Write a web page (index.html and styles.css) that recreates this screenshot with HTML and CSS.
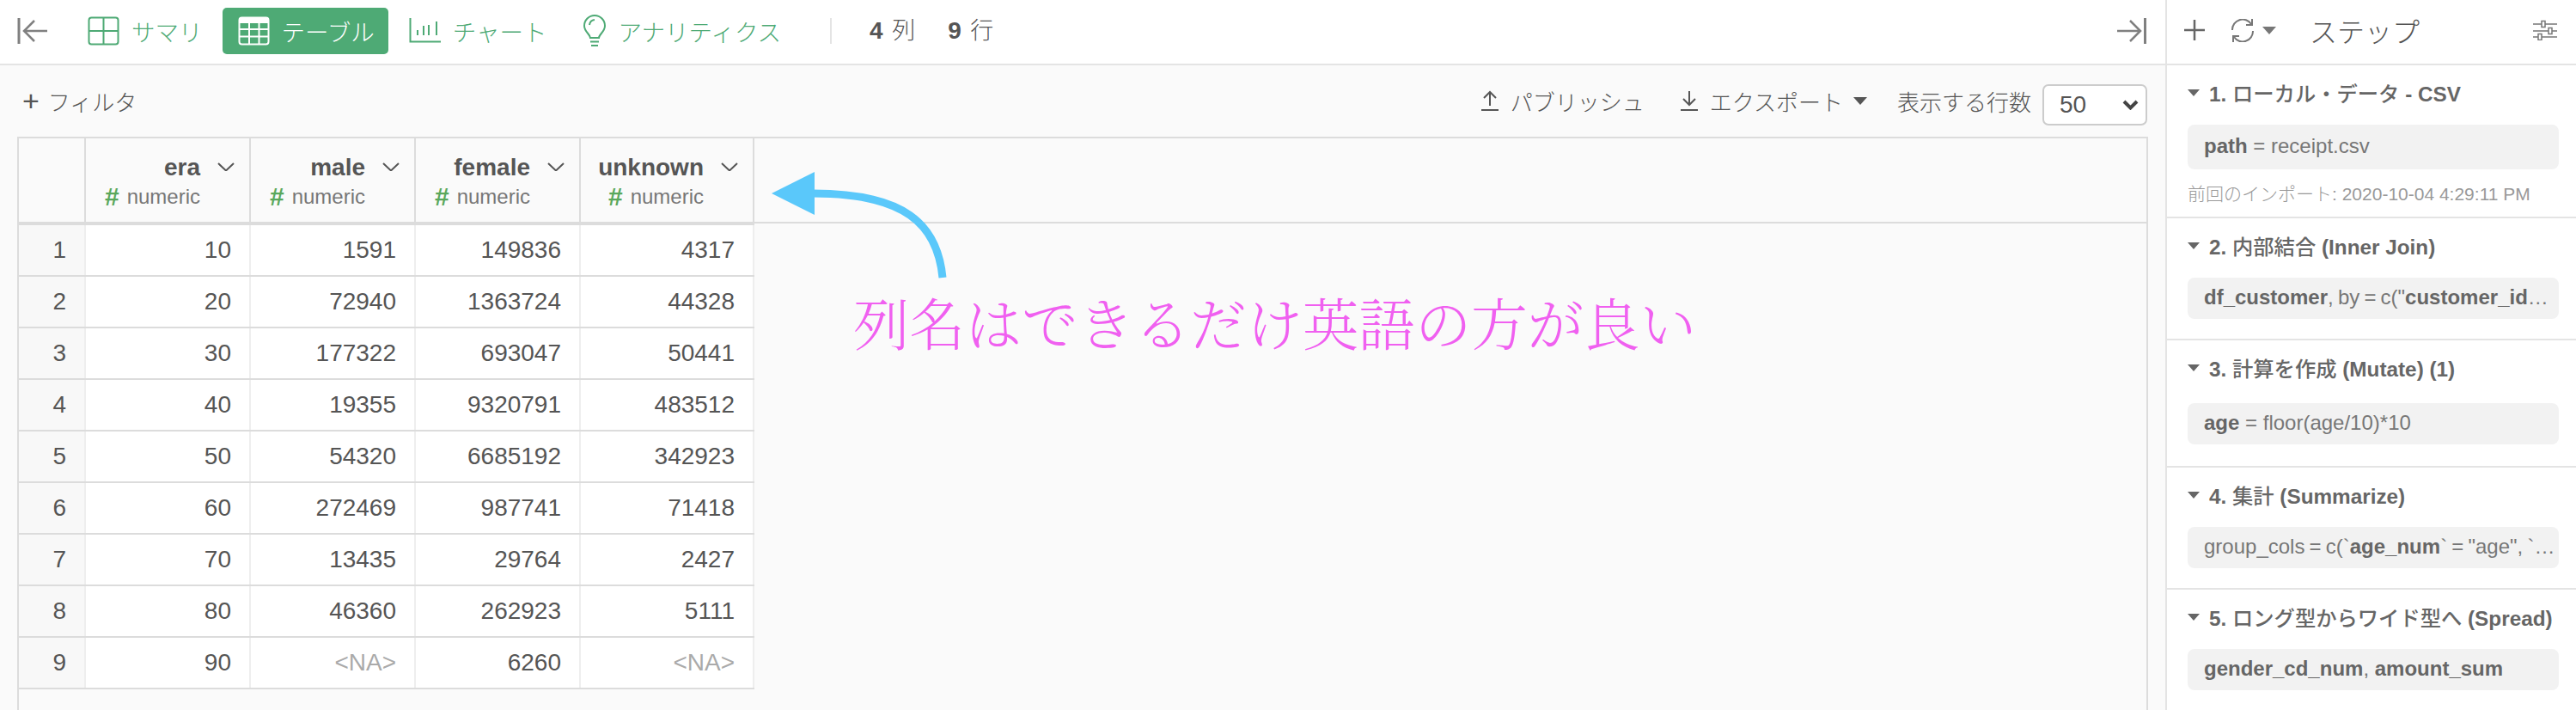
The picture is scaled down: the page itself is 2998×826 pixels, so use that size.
FILE: index.html
```html
<!DOCTYPE html>
<html lang="ja">
<head>
  <meta charset="UTF-8">
  <title>テーブル</title>
  <link rel="stylesheet" href="styles.css">
</head>
<body>
  <div class="app">
    <main class="main">
      <header class="toolbar">
        <svg class="icon-collapse" width="38" height="32" viewBox="0 0 38 32"><path d="M3 1v30" stroke-width="3"/><path d="M36 16H9M21 4L9 16l12 12" stroke-width="2.5"/></svg>
        <nav class="tabs">
          <a class="tab">
            <svg width="37" height="34" viewBox="0 0 37 34"><rect x="1.500" y="1.500" width="34" height="31" rx="3"/><path d="M18.500 2v30M2 17h33"/></svg>
            <span>サマリ</span>
          </a>
          <a class="tab tab-active">
            <svg width="37" height="34" viewBox="0 0 37 34"><rect x="1.500" y="1.500" width="34" height="31" rx="3"/><path d="M2 15h33M2 23.500h33M13 6v26M24.500 6v26"/><path d="M2 5h33" stroke-width="6"/></svg>
            <span>テーブル</span>
          </a>
          <a class="tab">
            <svg width="37" height="30" viewBox="0 0 37 30"><path d="M1.500 0v27.500H37"/><path d="M10 20v-6M17 20V9M23 20V8M32 20V4" stroke-width="2"/></svg>
            <span>チャート</span>
          </a>
          <a class="tab">
            <svg width="28" height="38" viewBox="0 0 28 38"><path d="M9 27c0-4-7-7-7-14a12 12 0 0 1 24 0c0 7-7 10-7 14zM9 31.500h10M10 36h8M14 6a7 7 0 0 0-6 6"/></svg>
            <span>アナリティクス</span>
          </a>
        </nav>
        <div class="counts">
          <span><b>4</b> 列</span>
          <span><b>9</b> 行</span>
        </div>
        <svg class="icon-collapse icon-collapse-right" width="36" height="32" viewBox="0 0 36 32"><path d="M33.500 1v30" stroke-width="3"/><path d="M1 16h27M16 4l12 12-12 12" stroke-width="2.500"/></svg>
      </header>

      <div class="filter-bar">
        <a class="action"><span class="plus">+</span>フィルタ</a>
        <div class="filter-right">
          <a class="action">
            <svg width="20" height="24" viewBox="0 0 20 24"><path d="M10 18V2M3 9l7-7 7 7M0 23h20"/></svg>
            パブリッシュ
          </a>
          <a class="action action-menu">
            <svg width="20" height="24" viewBox="0 0 20 24"><path d="M10 1v16M3 10l7 7 7-7M0 23h20"/></svg>
            エクスポート
            <i class="caret"></i>
          </a>
          <span class="action action-label">表示する行数</span>
          <div class="select">
            <span>50</span>
            <svg width="19" height="12" viewBox="0 0 19 12"><path d="M2 2l7.500 7.500L17 2"/></svg>
          </div>
        </div>
      </div>

      <section class="grid-panel">
        <div class="grid-head">
          <div class="row">
            <div class="head-cell"></div>
            <div class="head-cell">
              <div class="col-name">era <svg width="20" height="10" viewBox="0 0 20 10"><path d="M1 1l9 8.500L19 1"/></svg></div>
              <div class="col-type"><span class="hash">#</span>numeric</div>
            </div>
            <div class="head-cell">
              <div class="col-name">male <svg width="20" height="10" viewBox="0 0 20 10"><path d="M1 1l9 8.500L19 1"/></svg></div>
              <div class="col-type"><span class="hash">#</span>numeric</div>
            </div>
            <div class="head-cell">
              <div class="col-name">female <svg width="20" height="10" viewBox="0 0 20 10"><path d="M1 1l9 8.500L19 1"/></svg></div>
              <div class="col-type"><span class="hash">#</span>numeric</div>
            </div>
            <div class="head-cell">
              <div class="col-name">unknown <svg width="20" height="10" viewBox="0 0 20 10"><path d="M1 1l9 8.500L19 1"/></svg></div>
              <div class="col-type"><span class="hash">#</span>numeric</div>
            </div>
          </div>
        </div>
        <div class="grid-body">
          <div class="row"><div class="cell row-num">1</div><div class="cell">10</div><div class="cell">1591</div><div class="cell">149836</div><div class="cell">4317</div></div>
          <div class="row"><div class="cell row-num">2</div><div class="cell">20</div><div class="cell">72940</div><div class="cell">1363724</div><div class="cell">44328</div></div>
          <div class="row"><div class="cell row-num">3</div><div class="cell">30</div><div class="cell">177322</div><div class="cell">693047</div><div class="cell">50441</div></div>
          <div class="row"><div class="cell row-num">4</div><div class="cell">40</div><div class="cell">19355</div><div class="cell">9320791</div><div class="cell">483512</div></div>
          <div class="row"><div class="cell row-num">5</div><div class="cell">50</div><div class="cell">54320</div><div class="cell">6685192</div><div class="cell">342923</div></div>
          <div class="row"><div class="cell row-num">6</div><div class="cell">60</div><div class="cell">272469</div><div class="cell">987741</div><div class="cell">71418</div></div>
          <div class="row"><div class="cell row-num">7</div><div class="cell">70</div><div class="cell">13435</div><div class="cell">29764</div><div class="cell">2427</div></div>
          <div class="row"><div class="cell row-num">8</div><div class="cell">80</div><div class="cell">46360</div><div class="cell">262923</div><div class="cell">5111</div></div>
          <div class="row"><div class="cell row-num">9</div><div class="cell">90</div><div class="cell na">&lt;NA&gt;</div><div class="cell">6260</div><div class="cell na">&lt;NA&gt;</div></div>
        </div>

        <svg class="callout-arrow" width="210" height="130" viewBox="0 0 210 130"><path class="callout-shaft" d="M199 125C193 62 154 27 48 27"/><path class="callout-head" d="M0 27L50 2V52z"/></svg>
        <p class="callout-text">列名はできるだけ英語の方が良い</p>
      </section>
    </main>

    <aside class="sidebar">
      <header class="side-head">
        <svg class="side-plus" width="24" height="24" viewBox="0 0 24 24"><path d="M12 0v24M0 12h24"/></svg>
        <svg class="side-refresh" width="28" height="27" viewBox="0 0 28 27"><path d="M2 13A12 12 0 0 1 24 6M26 14A12 12 0 0 1 4 21"/><path d="M25 0v7h-7M3 27v-7h7"/></svg>
        <i class="caret"></i>
        <h2>ステップ</h2>
        <svg class="side-sliders" width="28" height="24" viewBox="0 0 28 24"><path d="M0 5h28M0 13h28M0 20h28"/><rect x="10" y="1.500" width="4" height="7"/><rect x="18" y="9.500" width="4" height="7"/><rect x="6" y="16.500" width="4" height="7"/></svg>
      </header>

      <section class="step">
        <h3 class="step-title"><i class="caret"></i><span>1. <span class="jp">ローカル・データ</span> - CSV</span></h3>
        <div class="step-box step-box-tall"><b>path</b> = receipt.csv</div>
        <p class="step-note">前回のインポート: 2020-10-04 4:29:11 PM</p>
      </section>
      <section class="step">
        <h3 class="step-title"><i class="caret"></i><span>2. <span class="jp">内部結合</span> (Inner Join)</span></h3>
        <div class="step-box step-box-long"><b>df_customer</b>, by = c("<b>customer_id</b>" = "customer_id")</div>
      </section>
      <section class="step step-loose">
        <h3 class="step-title"><i class="caret"></i><span>3. <span class="jp">計算を作成</span> (Mutate) (1)</span></h3>
        <div class="step-box"><b>age</b> = floor(age/10)*10</div>
      </section>
      <section class="step">
        <h3 class="step-title"><i class="caret"></i><span>4. <span class="jp">集計</span> (Summarize)</span></h3>
        <div class="step-box step-box-long step-box-cols">group_cols = c(`<b>age_num</b>` = "age", `gender_cd_num` = "gender_cd")</div>
      </section>
      <section class="step">
        <h3 class="step-title"><i class="caret"></i><span>5. <span class="jp">ロング型からワイド型へ</span> (Spread)</span></h3>
        <div class="step-box"><b>gender_cd_num</b>, <b>amount_sum</b></div>
      </section>
    </aside>
  </div>
</body>
</html>
```

FILE: styles.css
```css
:root {
  --green: #4eaa75;
  --line: #e4e4e4;
  --grid-line: #dcdcdc;
  --text: #555;
  --bg-panel: #fafafa;
}

* {
  box-sizing: border-box;
}

body {
  margin: 0;
  background: #fff;
  color: var(--text);
  font-family: "Liberation Sans", "Noto Sans CJK JP", sans-serif;
}

svg {
  flex: none;
  fill: none;
  stroke: currentColor;
  stroke-width: 2;
}

.app {
  display: flex;
  height: 826px;
  overflow: hidden;
}

.main {
  flex: 1;
  min-width: 0;
  display: flex;
  flex-direction: column;
  background: var(--bg-panel);
}

/* top toolbar */
.toolbar {
  height: 76px;
  flex: none;
  display: flex;
  align-items: center;
  padding: 0 21px 2px 19px;
  background: #fff;
  border-bottom: 2px solid var(--line);
}

.icon-collapse {
  color: #808080;
}

.icon-collapse-right {
  margin-left: auto;
}

.tabs {
  display: flex;
  gap: 6px;
  margin-left: 27px;
}

.tab {
  display: flex;
  align-items: center;
  gap: 14px;
  height: 54px;
  padding: 0 17px 0 18px;
  border-radius: 5px;
  color: var(--green);
  font-size: 27.5px;
  font-weight: 300;
}

.tab-active {
  padding-right: 16px;
  background: var(--green);
  color: #fff;
}

.counts {
  display: flex;
  gap: 38px;
  margin-left: 40px;
  padding-left: 44px;
  border-left: 2px solid var(--line);
  font-size: 27px;
  line-height: 30px;
  font-weight: 300;
}

.counts b {
  margin-right: 3px;
  font-size: 28px;
  font-weight: bold;
}

/* filter row */
.filter-bar {
  height: 83px;
  flex: none;
  display: flex;
  align-items: center;
  justify-content: space-between;
  padding: 22px 21px 13px 26px;
}

.filter-right {
  display: flex;
  align-items: center;
}

.action {
  display: flex;
  align-items: center;
  gap: 14px;
  padding-bottom: 10px;
  font-size: 26px;
  font-weight: 300;
  color: #555;
}

.filter-right .action {
  margin-right: 42px;
}

.filter-right .action-menu {
  margin-right: 35px;
}

.action-menu .caret {
  margin-left: -2px;
}

.filter-right .action-label {
  margin-right: 13px;
}

.plus {
  font-size: 34px;
  line-height: 30px;
  margin-right: -4px;
}

.caret {
  display: inline-block;
  width: 0;
  height: 0;
  border-left: 8px solid transparent;
  border-right: 8px solid transparent;
  border-top: 9px solid #555;
}

.select {
  width: 122px;
  height: 48px;
  display: flex;
  align-items: center;
  justify-content: space-between;
  padding: 0 8px 0 18px;
  background: #fff;
  border: 2px solid #ccc;
  border-radius: 7px;
  font-size: 28px;
}

.select svg {
  stroke-width: 4;
  color: #444;
}

/* data grid */
.grid-panel {
  position: relative;
  flex: 1;
  width: 2480px;
  margin-left: 20px;
  border: 2px solid var(--grid-line);
  border-bottom: 0;
}

.grid-head {
  height: 99px;
  border-bottom: 2px solid var(--grid-line);
}

.row {
  display: grid;
  grid-template-columns: 78px 192px 192px 192px 202px;
  width: 856px;
}

.head-cell {
  height: 97px;
  padding-top: 17px;
  border-right: 2px solid var(--grid-line);
}

.col-name {
  display: flex;
  align-items: center;
  justify-content: flex-end;
  gap: 20px;
  height: 34px;
  padding-right: 17px;
  font-size: 28px;
  font-weight: bold;
}

.col-name svg {
  color: #555;
  margin-top: -2px;
}

.col-type {
  display: flex;
  align-items: center;
  justify-content: flex-end;
  height: 34px;
  padding-right: 57px;
  font-size: 24px;
  color: #777;
}

.hash {
  margin-right: 9px;
  color: #5aa85c;
  font-size: 30px;
  font-weight: bold;
}

.grid-body {
  width: 856px;
  border-top: 2px solid var(--grid-line);
}

.grid-body .row {
  height: 60px;
  background: #fff;
  border-bottom: 2px solid var(--grid-line);
}

.cell {
  padding-right: 21px;
  line-height: 58px;
  text-align: right;
  font-size: 28px;
  border-right: 2px solid #eee;
}

.row-num {
  background: #f8f8f8;
}

.na {
  color: #aaa;
}

/* annotation */
.callout-arrow {
  position: absolute;
  left: 876px;
  top: 37px;
}

.callout-shaft {
  stroke: #5ac8fa;
  stroke-width: 9;
}

.callout-head {
  fill: #5ac8fa;
  stroke: none;
}

.callout-text {
  position: absolute;
  left: 971px;
  top: 173px;
  margin: 0;
  color: #f060f0;
  font-family: "Noto Serif CJK JP", "Noto Sans CJK JP", serif;
  font-size: 65.4px;
  line-height: 80px;
  font-weight: 300;
  white-space: nowrap;
}

/* steps sidebar */
.sidebar {
  width: 478px;
  flex: none;
  border-left: 2px solid var(--line);
  background: #fff;
}

.side-head {
  height: 76px;
  display: flex;
  align-items: center;
  padding: 0 22px 4px 20px;
  border-bottom: 2px solid var(--line);
  color: #777;
}

.side-plus {
  color: #666;
  stroke-width: 2.500;
}

.side-refresh {
  margin-left: 30px;
}

.side-head .caret {
  margin-left: 9px;
  border-top-color: #777;
}

.side-head h2 {
  margin: 0 0 0 39px;
  font-size: 32px;
  font-weight: 300;
  color: #555;
}

.side-sliders {
  margin-left: auto;
  stroke-width: 1.500;
}

.side-sliders rect {
  fill: #fff;
}

.step {
  padding: 16px 20px 23px 24px;
  border-bottom: 2px solid var(--line);
}

.step-title {
  display: flex;
  align-items: center;
  gap: 11px;
  height: 34px;
  margin: 0 0 19px;
  padding-bottom: 3px;
  font-size: 24.3px;
  color: #666;
}

.step-title .jp {
  font-weight: 500;
}

.step-title .caret {
  border-left-width: 7px;
  border-right-width: 7px;
  border-top: 8px solid #666;
}

.step-box {
  height: 48px;
  padding: 0 8px 0 19px;
  overflow: hidden;
  white-space: nowrap;
  text-overflow: ellipsis;
  line-height: 46px;
  background: #f2f2f2;
  border-radius: 8px;
  font-size: 24px;
  color: #777;
}

.step-box b {
  color: #666;
}

.step-box-long {
  padding-right: 7px;
  word-spacing: -1.500px;
}

.step-box-cols {
  padding-right: 2px;
}

.step-box-tall {
  height: 52px;
  line-height: 50px;
}

.step-note {
  margin: 14px 0 -12px;
  font-size: 21px;
  line-height: 30px;
  font-weight: 300;
  color: #999;
}

.step-loose {
  padding-bottom: 25px;
}

.step-loose .step-title {
  margin-bottom: 23px;
}
```
